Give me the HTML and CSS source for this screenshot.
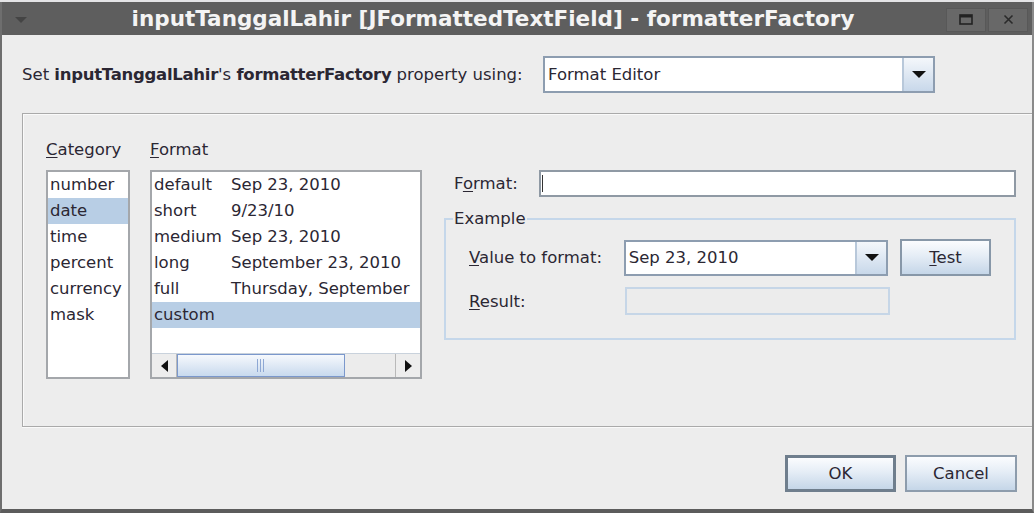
FILE: index.html
```html
<!DOCTYPE html>
<html>
<head>
<meta charset="utf-8">
<link rel="stylesheet" href="styles.css">
</head>
<body>
<div class="window">
  <div class="titlebar">
    <div class="tb-left"><span class="menu-tri"></span></div>
    <div class="title">inputTanggalLahir [JFormattedTextField] - formatterFactory</div>
    <div class="wbtns">
      <div class="wbtn"><svg width="14" height="11" viewBox="0 0 14 11"><rect x="1" y="1" width="12" height="9" fill="none" stroke="#222" stroke-width="1.6"/><rect x="1" y="1" width="12" height="2.5" fill="#222"/></svg></div>
      <div class="wbtn"><svg width="11" height="11" viewBox="0 0 11 11"><path d="M1.5 1.5 L9.5 9.5 M9.5 1.5 L1.5 9.5" stroke="#2a2a2a" stroke-width="1.6"/></svg></div>
    </div>
  </div>
  <div class="content">
    <div class="toprow">
      <span class="prompt">Set <b>inputTanggalLahir</b>'s <b>formatterFactory</b> property using:</span>
      <div class="combo combo-big">
        <div class="combo-text">Format Editor</div>
        <div class="combo-arrow"><span class="tri-down"></span></div>
      </div>
    </div>
    <div class="panel">
      <div class="col col-cat">
        <div class="lbl"><u>C</u>ategory</div>
        <div class="list list-cat">
          <div class="row">number</div>
          <div class="row sel">date</div>
          <div class="row">time</div>
          <div class="row">percent</div>
          <div class="row">currency</div>
          <div class="row">mask</div>
        </div>
      </div>
      <div class="col col-fmt">
        <div class="lbl"><u>F</u>ormat</div>
        <div class="list list-fmt">
          <div class="rows">
            <div class="row"><span class="k">default</span><span class="v">Sep 23, 2010</span></div>
            <div class="row"><span class="k">short</span><span class="v">9/23/10</span></div>
            <div class="row"><span class="k">medium</span><span class="v">Sep 23, 2010</span></div>
            <div class="row"><span class="k">long</span><span class="v">September 23, 2010</span></div>
            <div class="row"><span class="k">full</span><span class="v">Thursday, September</span></div>
            <div class="row sel"><span class="k">custom</span></div>
          </div>
          <div class="hscroll">
            <div class="sb-btn"><span class="tri-left"></span></div>
            <div class="sb-track">
              <div class="sb-thumb"><span class="grip"></span></div>
            </div>
            <div class="sb-btn sb-btn-r"><span class="tri-right"></span></div>
          </div>
        </div>
      </div>
      <div class="col col-right">
        <div class="fmt-row">
          <span class="fmt-label">F<u>o</u>rmat:</span>
          <div class="textfield"><span class="caret"></span></div>
        </div>
        <fieldset class="example">
          <legend>Example</legend>
          <div class="ex-row">
            <span class="ex-label"><u>V</u>alue to format:</span>
            <div class="combo combo-small">
              <div class="combo-text">Sep 23, 2010</div>
              <div class="combo-arrow"><span class="tri-down"></span></div>
            </div>
            <div class="btn btn-test"><span><u>T</u>est</span></div>
          </div>
          <div class="ex-row ex-row2">
            <span class="ex-label"><u>R</u>esult:</span>
            <div class="resultfield"></div>
          </div>
        </fieldset>
      </div>
    </div>
    <div class="footer">
      <div class="btn btn-ok">OK</div>
      <div class="btn btn-cancel">Cancel</div>
    </div>
  </div>
</div>
</body>
</html>
```

FILE: styles.css
```css
* { box-sizing: border-box; }
html, body { margin: 0; padding: 0; }
body {
  width: 1034px;
  height: 513px;
  overflow: hidden;
  background: #e4e4e6;
  font-family: "DejaVu Sans", sans-serif;
  font-size: 16.5px;
  color: #2b2733;
}
u { text-decoration-thickness: 1px; text-underline-offset: 2px; }
.window {
  margin-top: 2px;
  height: 511px;
  display: flex;
  flex-direction: column;
  background: #ededed;
  border-left: 2px solid #6e6e6e;
  border-right: 2px solid #8a8a8a;
  border-bottom: 4px solid #5c5c5c;
}
.titlebar {
  height: 33px;
  flex: none;
  background: #5e5e5e;
  display: flex;
  align-items: center;
}
.tb-left {
  width: 38px;
  display: flex;
  justify-content: center;
  padding-top: 2px;
}
.menu-tri {
  width: 0; height: 0;
  border-left: 6px solid transparent;
  border-right: 6px solid transparent;
  border-top: 6px solid #444;
}
.title {
  flex: 1;
  text-align: center;
  font-weight: bold;
  font-size: 21.5px;
  color: #f4f4f4;
  white-space: nowrap;
}
.wbtns {
  display: flex;
  gap: 2px;
  padding-right: 4px;
  height: 100%;
  align-items: center;
  padding-top: 2px;
}
.wbtn {
  width: 40px;
  height: 24px;
  background: #686868;
  border: 1px solid #585858;
  display: flex;
  align-items: center;
  justify-content: center;
}
.content {
  flex: 1;
  display: flex;
  flex-direction: column;
}
.toprow {
  display: flex;
  align-items: center;
  margin-top: 21px;
  padding-left: 20px;
  height: 37px;
}
.prompt { width: 521px; white-space: nowrap; }
.prompt b { font-weight: bold; letter-spacing: -0.28px; }
.combo {
  display: flex;
  background: #fff;
  border: 2px solid #8d9db0;
}
.combo-big { width: 392px; height: 37px; }
.combo-small { width: 265px; height: 36px; }
.combo-text {
  flex: 1;
  display: flex;
  align-items: center;
  padding-left: 3px;
  border-right: 2px solid #b8c8da;
}
.combo-arrow {
  width: 29px;
  display: flex;
  align-items: center;
  justify-content: center;
  background: linear-gradient(#f4f7fb, #c8d8ea);
}
.tri-down {
  width: 0; height: 0;
  border-left: 7px solid transparent;
  border-right: 7px solid transparent;
  border-top: 7px solid #111;
}
.panel {
  margin: 20px 0 0 20px;
  height: 314px;
  border-top: 1px solid #aaaaaa;
  border-left: 1px solid #aaaaaa;
  border-bottom: 1px solid #aaaaaa;
  box-shadow: inset 1px 1px 0 #fafafa, 0 1px 0 #fafafa;
  display: flex;
  padding: 23px 0 0 23px;
}
.col { display: flex; flex-direction: column; }
.lbl {
  height: 22px;
  line-height: 22px;
  margin-top: 2px;
  margin-bottom: 9px;
}
.list {
  background: #fff;
  border: 2px solid #a4a7ab;
  height: 209px;
}
.col-cat { width: 84px; }
.col-fmt { width: 272px; margin-left: 20px; }
.row {
  height: 26px;
  line-height: 26px;
  padding-left: 2px;
  white-space: nowrap;
}
.row.sel { background: #b8cee5; }
.list-fmt { display: flex; flex-direction: column; overflow: hidden; }
.rows { flex: 1; overflow: hidden; }
.list-fmt .row { display: flex; }
.k { width: 77px; flex: none; }
.hscroll {
  height: 24px;
  display: flex;
  background: #ececec;
  border-top: 1px solid #c9d2dc;
}
.sb-btn {
  width: 25px;
  display: flex;
  align-items: center;
  justify-content: center;
  background: #ededed;
  border-right: 1px solid #b9b9b9;
}
.sb-btn-r { border-right: none; border-left: 1px solid #b9b9b9; }
.tri-left {
  width: 0; height: 0;
  border-top: 6px solid transparent;
  border-bottom: 6px solid transparent;
  border-right: 7px solid #111;
}
.tri-right {
  width: 0; height: 0;
  border-top: 6px solid transparent;
  border-bottom: 6px solid transparent;
  border-left: 7px solid #111;
}
.sb-track { flex: 1; display: flex; }
.sb-thumb {
  width: 168px;
  border: 1px solid #7b98cc;
  background: linear-gradient(#f6f9fd, #dfe9f5 50%, #c8daee);
  display: flex;
  align-items: center;
  justify-content: center;
}
.grip {
  width: 9px;
  height: 13px;
  background: repeating-linear-gradient(90deg, #8ea8d4 0 1px, transparent 1px 3px);
}
.col-right { width: 572px; margin-left: 22px; }
.fmt-row {
  display: flex;
  align-items: center;
  margin-top: 33px;
  height: 27px;
}
.fmt-label { width: 95px; padding-left: 10px; }
.textfield {
  flex: 1;
  height: 27px;
  background: #fff;
  border: 2px solid #8f99a4;
  padding: 3px 0 0 1px;
}
.caret { display: block; width: 1px; height: 17px; background: #333; }
.example {
  margin: 12px 0 0 0;
  padding: 10px 23px 23px 23px;
  border: 2px solid #c5d7ea;
  min-width: 0;
}
.example legend {
  padding: 0 1px;
  margin-left: -16px;
  line-height: 20px;
}
.ex-row {
  display: flex;
  align-items: center;
  height: 37px;
}
.ex-row2 { margin-top: 11px; height: 28px; }
.ex-label { width: 155px; }
.btn {
  display: flex;
  align-items: center;
  justify-content: center;
  border: 2px solid #8797a8;
  background: linear-gradient(#fbfcfe, #e5edf6 45%, #c5d6e8);
}
.btn-test { width: 91px; height: 37px; margin-left: 12px; }
.resultfield {
  width: 265px;
  height: 28px;
  margin-left: 1px;
  border: 2px solid #c6d6e7;
  background: #ececec;
}
.footer {
  display: flex;
  justify-content: flex-end;
  gap: 9px;
  padding-right: 15px;
  margin-top: 28px;
}
.btn-ok { width: 111px; height: 37px; border: 3px solid #6f7e8d; }
.btn-cancel { width: 112px; height: 37px; border-color: #8d9cac; }
```
